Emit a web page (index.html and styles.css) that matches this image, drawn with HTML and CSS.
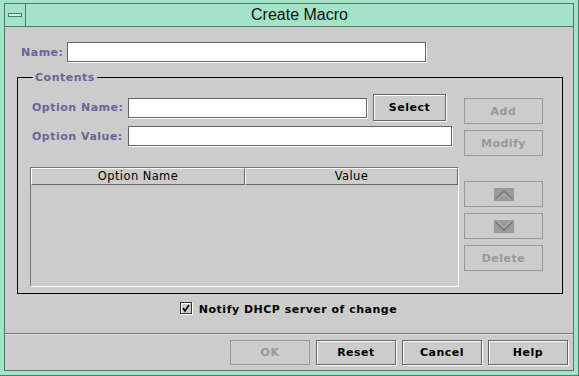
FILE: index.html
```html
<!DOCTYPE html>
<html>
<head>
    <link rel="stylesheet" href="styles.css">
</head>
<body>
    <div class="window">
        <!-- Title bar -->
        <div class="titlebar">
            <div class="menu-btn"><span class="menu-bar"></span></div>
            <div class="title">Create Macro</div>
        </div>

        <div class="content">
            <div class="name-row">
                <label class="lbl">Name:</label>
                <input class="field name-field" type="text">
            </div>

            <!-- Contents group -->
            <fieldset class="group">
                <legend class="lbl">Contents</legend>
                <div class="group-body">
                    <div class="left">
                        <div class="row row1">
                            <label class="lbl opt-lbl">Option Name:</label>
                            <input class="field opt-name" type="text">
                            <button class="btn select-btn">Select</button>
                        </div>
                        <div class="row row2">
                            <label class="lbl opt-lbl">Option Value:</label>
                            <input class="field opt-value" type="text">
                        </div>
                        <div class="table">
                            <div class="thead">
                                <div class="th th-name">Option Name</div>
                                <div class="th th-value">Value</div>
                            </div>
                            <div class="tbody"></div>
                        </div>
                    </div>
                    <div class="side">
                        <button class="btn off">Add</button>
                        <button class="btn off">Modify</button>
                        <button class="btn off arrow-btn up-btn">
                            <svg width="20" height="13" viewBox="0 0 20 13">
                                <rect width="20" height="13" fill="#9a9a9a"/>
                                <polyline points="1.5,11 10,3 18.5,11" fill="none" stroke="#7a7a7a" stroke-width="1.4"/>
                                <polyline points="3,12 10,5.5 17,12" fill="none" stroke="#b4b4b4" stroke-width="1"/>
                            </svg>
                        </button>
                        <button class="btn off arrow-btn">
                            <svg width="20" height="13" viewBox="0 0 20 13">
                                <rect width="20" height="13" fill="#9a9a9a"/>
                                <polyline points="1.5,2 10,10 18.5,2" fill="none" stroke="#7a7a7a" stroke-width="1.4"/>
                                <polyline points="3,1 10,7.5 17,1" fill="none" stroke="#b4b4b4" stroke-width="1"/>
                            </svg>
                        </button>
                        <button class="btn off">Delete</button>
                    </div>
                </div>
            </fieldset>

            <div class="notify">
                <svg class="check" width="14" height="14" viewBox="0 0 14 14">
                    <rect x="1.5" y="1.5" width="11" height="11" fill="#cccccc" stroke="#ffffff"/>
                    <rect x="0.5" y="0.5" width="11" height="11" fill="none" stroke="#333333"/>
                    <polyline points="3,6 5,9 9,3" fill="none" stroke="#000" stroke-width="1.6"/>
                </svg>
                <span>Notify DHCP server of change</span>
            </div>

            <div class="sep"></div>

            <div class="actions">
                <button class="btn off wide">OK</button>
                <button class="btn wide">Reset</button>
                <button class="btn wide">Cancel</button>
                <button class="btn wide">Help</button>
            </div>
        </div>
    </div>
</body>
</html>
```

FILE: styles.css
```css
body {
    margin: 0;
    font-family: 'DejaVu Sans', sans-serif;
    background: #a3e4c8;
}

/* Window frame */
.window {
    width: 579px;
    height: 376px;
    box-sizing: border-box;
    padding: 3px 4px 4px 4px;
    background: #a3e4c8;
    border-right: 1px solid #4f7a67;
    border-bottom: 1px solid #4f7a67;
    display: flex;
    flex-direction: column;
}

.titlebar {
    height: 24px;
    box-sizing: border-box;
    border: 1px solid #4f7a67;
    display: flex;
}

.menu-btn {
    width: 20px;
    border-right: 1px solid #4f7a67;
    display: flex;
    align-items: center;
    justify-content: center;
}

.menu-bar {
    width: 12px;
    height: 2px;
    border: 1px solid #4f7a67;
    background: #d8f4e8;
}

.title {
    flex: 1;
    text-align: center;
    font-family: 'Liberation Sans', Arial, sans-serif;
    font-size: 16px;
    line-height: 22px;
    color: #111;
}

/* Dialog body */
.content {
    flex: 1;
    background: #cccccc;
    border: 1px solid #4f7a67;
    border-top: none;
    padding: 15px 5px 0 12px;
    display: flex;
    flex-direction: column;
}

.lbl {
    font-family: 'DejaVu Sans', sans-serif;
    font-weight: bold;
    font-size: 11px;
    letter-spacing: 0.5px;
    color: #666699;
}

.field {
    box-sizing: border-box;
    height: 20px;
    margin: 0;
    padding: 0 3px;
    background: #fff;
    border: 1px solid #666;
    box-shadow: 1px 1px 0 #fff;
    outline: none;
}

.name-row {
    display: flex;
    align-items: center;
    gap: 4px;
    margin-left: 4px;
}

.name-field {
    width: 359px;
}

/* Contents group */
.group {
    margin: 9px 5px 0 0;
    padding: 0 18px 6px 12px;
    border: 1px solid #000;
    min-width: 0;
}

.group legend {
    padding: 0 2px;
    margin-left: 3px;
}

.group-body {
    display: flex;
    gap: 5px;
}

.left {
    width: 429px;
    flex-shrink: 0;
    padding-top: 10px;
}

.row {
    display: flex;
    align-items: center;
    margin-left: 2px;
}

.opt-lbl {
    width: 96px;
}

.opt-name {
    width: 239px;
}

.row2 {
    margin-top: 5px;
}

.opt-value {
    width: 324px;
}

.btn {
    box-sizing: border-box;
    margin: 0;
    padding: 0;
    font-family: 'DejaVu Sans', sans-serif;
    font-weight: bold;
    font-size: 11px;
    letter-spacing: 0.5px;
    color: #000;
    background: #cccccc;
    border: 1px solid #666;
    box-shadow: inset 1px 1px 0 #fff, 1px 1px 0 #fff;
}

.btn.off {
    color: #999;
    border-color: #999;
    box-shadow: none;
}

.select-btn {
    width: 73px;
    height: 27px;
    margin-left: 6px;
}

.side {
    width: 79px;
    flex-shrink: 0;
    padding-top: 14px;
    display: flex;
    flex-direction: column;
    gap: 6px;
}

.side .btn {
    height: 26px;
}

.arrow-btn {
    display: flex;
    align-items: center;
    justify-content: center;
}

.up-btn {
    margin-top: 19px;
}

/* Table */
.table {
    margin-top: 21px;
    height: 120px;
    box-sizing: border-box;
    border: 1px solid #777;
    border-right-color: #fff;
    border-bottom-color: #fff;
    display: flex;
    flex-direction: column;
}

.thead {
    display: flex;
    height: 17px;
}

.th {
    box-sizing: border-box;
    border-top: 1px solid #fff;
    border-left: 1px solid #fff;
    border-bottom: 1px solid #666;
    border-right: 1px solid #666;
    font-size: 11.5px;
    line-height: 15px;
    text-align: center;
    letter-spacing: 0.4px;
    color: #000;
}

.th-name {
    width: 214px;
}

.th-value {
    flex: 1;
}

.tbody {
    flex: 1;
}

/* Notify checkbox */
.notify {
    margin-top: 8px;
    display: flex;
    align-items: center;
    justify-content: center;
    gap: 5px;
    font-weight: bold;
    font-size: 11px;
    letter-spacing: 0.5px;
    color: #000;
    padding-right: 8px;
}

.sep {
    margin: 17px -5px 0 -12px;
    height: 1px;
    background: #7070a8;
    border-bottom: 1px solid #e4e4ee;
}

.actions {
    margin-top: 5px;
    display: flex;
    justify-content: flex-end;
    gap: 6px;
}

.wide {
    width: 80px;
    height: 25px;
}
```
